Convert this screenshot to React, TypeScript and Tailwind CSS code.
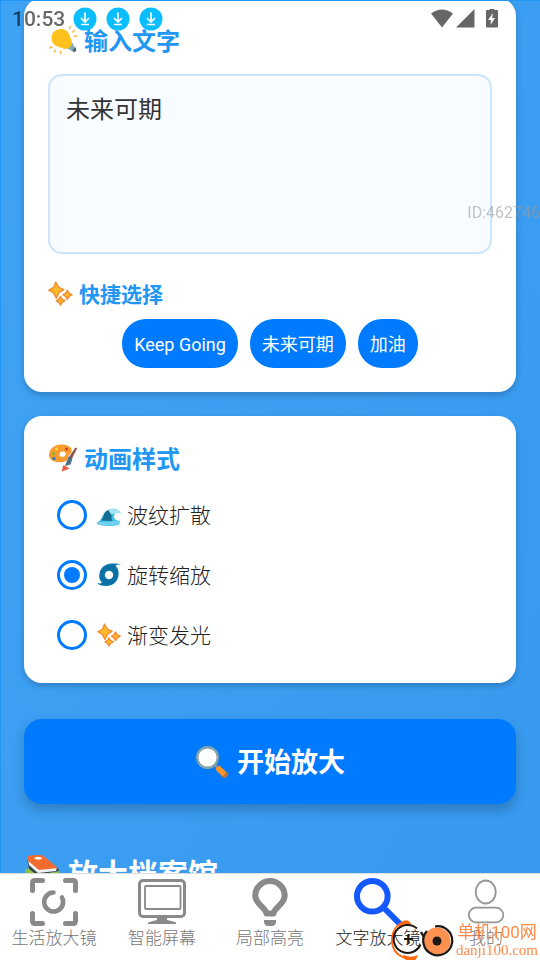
import { useState } from "react"
import type { ReactNode } from "react"

interface IconProps {
  className?: string
}

function BulbEmoji({ className }: IconProps) {
  return (
    <svg viewBox="0 0 30 30" className={className} aria-hidden="true">
      <path d="M20 17l4.500 1 3.500 6.500-2.500 2.500-7-4z" fill="#82aeb5" />
      <path d="M24.500 24.500l3-2.500 1 3.500-2.500 2z" fill="#4f6a75" />
      <path
        d="M3.500 12.500C3.500 7.500 8 4 13 4c4.500 0 7.500 2.500 8.500 6.500.700 3 2.500 4.500 2.500 7 0 3.500-3 6.500-6.500 6.500-2.500 0-4-1.500-7-2.200C6.500 21 3.500 17.500 3.500 12.500z"
        fill="#fdc01c"
      />
      <g stroke="#fcb533" strokeWidth="1.400" strokeLinecap="round">
        <path d="M21.500 3.500l.900-1.700M24.500 7l2-1.500M26.500 11l2 .300M4 22l-2.300 1M7.500 25l-1.200 2M12.500 26.500l.300 2" />
      </g>
    </svg>
  )
}

function SparklesEmoji({ className }: IconProps) {
  return (
    <svg viewBox="0 0 24 24" className={className} aria-hidden="true">
      <g fill="#fcb929" stroke="#f5892f" strokeWidth="1.300" strokeLinejoin="round">
        <path d="M7.500 1l2.700 5 5 2.300-4.800 3L8 16.500l-2.700-5L.800 8.800l4.700-2.600z" />
        <path d="M18.500 9l1.500 2.700 3.200 1.500-3 1.700-1.700 2.700-1.500-2.700-2.700-1.700 2.700-1.500z" />
        <path d="M12 14.800l1.400 2.600 2.900 1.500-2.900 1.600-1.400 2.700-1.500-2.700L8 18.900l2.500-1.500z" />
      </g>
    </svg>
  )
}

function PaletteEmoji({ className }: IconProps) {
  return (
    <svg viewBox="0 0 30 30" className={className} aria-hidden="true">
      <path
        fillRule="evenodd"
        d="M1 12C1 6 6.500 1.500 13.500 1.500c6 0 10.500 2.500 10.200 6.500-.200 3-3.200 3.500-3.700 6-.300 2-1 4.500-5 5-7 1-14-1-14-7zm14-3.500c-2.500 0-4 1.700-3.500 3.700.700 2 5.200 2.300 6.200-.200.700-2-.700-3.500-2.700-3.500z"
        fill="#f99b2d"
      />
      <circle cx="18.500" cy="6" r="1.500" fill="#c7392b" />
      <circle cx="5.500" cy="10.500" r="1.500" fill="#7cb342" />
      <circle cx="8.500" cy="6" r="1.500" fill="#fdd835" />
      <circle cx="6" cy="15.500" r="1.700" fill="#2386c8" />
      <path d="M27.500 4.500l1.600.800-6 12-3.200-1.700z" fill="#8d5548" />
      <path d="M20.500 13.500l4 2-2 6-5.500 1.500z" fill="#4d7080" />
      <path d="M15.500 22l6 3.500-3.500 1.500-4.500 1.500c1-2 1-4.500 2-6.500z" fill="#ef5a3c" />
    </svg>
  )
}

function WaveEmoji({ className }: IconProps) {
  return (
    <svg viewBox="0 0 24 24" className={className} aria-hidden="true">
      <path
        d="M0 19.500c3-1 4-3.500 5.500-6.500C7.500 8.500 11 6 15.500 5.700c4-.200 7.500 1.800 8.500 5.300-2-1.500-4-1.500-5.500-.500-1.700 1.500-2 4-.500 5.800 1.300 1.200 3 1.700 5 1.700l-1 4c-7 1.300-17 1.300-22-1z"
        fill="#42bfe8"
      />
      <path d="M4 17.500c2-2 2.500-5.500 4-8 1.500-1.800 4-3 6.500-3l1.500 3.500c-2 2-2 5-.500 8z" fill="#146e93" />
      <path d="M11 7c5-2.500 11-1.500 13 4-2.500-1.800-5-1.300-6.200.500l-1.800-1-1.500 1.500-1.200-2z" fill="#a9e4f5" />
      <path d="M0 19.500c6-2 9 .500 13-1 4-1 8-1 10-.500l-1 3.500c-7 1.500-17 1-22-1z" fill="#6fd0f0" />
    </svg>
  )
}

function CycloneEmoji({ className }: IconProps) {
  return (
    <svg viewBox="0 0 24 24" className={className} aria-hidden="true">
      <path
        fillRule="evenodd"
        d="M24 1.500c-2.500-.300-4.500.200-5.500 1.300C21 5 22 8.500 21.500 12.500 20.500 19 15.500 23 9 23c-4 0-7.500-1-9-3 2 .800 4 .500 5-.500C2.500 17 1.700 14 2.500 10.500 3.500 4.500 8.500 .8 15 .500c3.500-.200 7 0 9 1zM12 7.800a4.200 4.200 0 1 0 0 8.400 4.200 4.200 0 0 0 0-8.400z"
        fill="#0872a6"
      />
    </svg>
  )
}

function MagnifierEmoji({ className }: IconProps) {
  return (
    <svg viewBox="0 0 34 34" className={className} aria-hidden="true">
      <path d="M19 19l5 5" stroke="#78909c" strokeWidth="3" />
      <circle cx="12.500" cy="12.500" r="10.300" fill="#fff" stroke="#82a5aa" strokeWidth="2.400" />
      <path d="M24 24l5.500 5.500" stroke="#f79329" strokeWidth="6" strokeLinecap="round" />
      <path d="M28.500 32l4-4" stroke="#b96a2d" strokeWidth="2" strokeLinecap="round" />
    </svg>
  )
}

function BooksEmoji({ className }: IconProps) {
  return (
    <svg viewBox="0 0 36 36" className={className} aria-hidden="true">
      <path d="M1 16l4-2 10 6 20-3v12l-20 5L2 24z" fill="#8bc34a" />
      <path d="M3 5l2 10 8 6 22-4-1-3z" fill="#37474f" />
      <path d="M4 6l10 9 19-2-1 4-18 2L5 11z" fill="#f3f3f3" />
      <path d="M3 3c1-1.500 9-2.500 16-1.500L34 14l-19 2L3 6z" fill="#f26c30" />
      <path d="M10 4c2-1.500 7-1.500 8 0-1 2-6 2.500-8 0z" fill="#fff" />
    </svg>
  )
}

function ScanIcon() {
  return (
    <svg viewBox="0 0 48 48" className="size-12" fill="none" stroke="#8a8a8a" strokeWidth="5" strokeLinecap="round" aria-hidden="true">
      <path d="M2.500 12.500V5q0-2.500 2.500-2.500h7.500M35.500 2.500H43q2.500 0 2.500 2.500v7.500M45.500 35.500V43q0 2.500-2.500 2.500h-7.500M12.500 45.500H5q-2.500 0-2.500-2.500v-7.500" />
      <path d="M23.500 14.500a9.500 9.500 0 1 0 8.500 5" strokeWidth="4.600" />
    </svg>
  )
}

function ScreenIcon() {
  return (
    <svg viewBox="0 0 48 48" className="size-12" fill="none" stroke="#8a8a8a" aria-hidden="true">
      <rect x="1.500" y="2.500" width="45" height="36" rx="3.500" strokeWidth="3" />
      <rect x="7" y="8" width="35.500" height="23" rx="1" strokeWidth="1.800" />
      <path d="M19 39h10v3q6 1 9 2.500v1.500H10v-1.500q4-1.500 9-2.500z" fill="#8a8a8a" stroke="none" />
    </svg>
  )
}

function LightIcon() {
  return (
    <svg viewBox="0 0 48 48" className="size-12" aria-hidden="true">
      <path
        d="M20.500 35.500C20 30 9.300 26 9.300 17.700a14.700 14.700 0 0 1 29.400 0C38.700 26 28 30 27.500 35.500z"
        fill="none"
        stroke="#8a8a8a"
        strokeWidth="6"
        strokeLinejoin="round"
      />
      <path d="M18 42h12v2.500q-1 3.500-4 3.500h-4q-3 0-4-3.500z" fill="#8a8a8a" />
    </svg>
  )
}

function SearchIcon() {
  return (
    <svg viewBox="0 0 48 48" className="size-12" fill="none" stroke="#1459ff" strokeWidth="6" aria-hidden="true">
      <circle cx="18.300" cy="18.300" r="15.300" />
      <path d="M29 29l18 18" />
    </svg>
  )
}

function PersonIcon() {
  return (
    <svg viewBox="0 0 48 48" className="size-12" fill="none" stroke="#969696" strokeWidth="1.800" aria-hidden="true">
      <ellipse cx="23.700" cy="14" rx="10" ry="11.500" />
      <rect x="6.800" y="29.700" width="34.500" height="14.600" rx="7.300" />
    </svg>
  )
}

function DownloadBadge() {
  return (
    <svg viewBox="0 0 24 24" className="size-6" aria-hidden="true">
      <circle cx="12" cy="12" r="11.500" fill="#09bdff" />
      <path d="M12 5.500v9M8 11l4 4 4-4M8 17.500h8" fill="none" stroke="#fff" strokeWidth="1.700" />
    </svg>
  )
}

function StatusBar() {
  return (
    <div className="fixed inset-x-0 top-0 flex h-9 items-center pt-px pr-10 pl-3 font-[Roboto,sans-serif]">
      <span className="text-[21px] leading-6 font-medium text-black/60">10:53</span>
      <div className="ml-2 flex gap-[9px]">
        <DownloadBadge />
        <DownloadBadge />
        <DownloadBadge />
      </div>
      <svg viewBox="0 0 70 20" className="ml-auto h-5 w-[70px]" fill="#666" aria-hidden="true">
        <path d="M1 4.500Q12 -3.500 23 4.500L12 18.500z" />
        <path d="M44.500 0v18.500H26z" />
        <path
          fillRule="evenodd"
          d="M59.500 -1h5v2H67q1 0 1 1v15.500q0 1-1 1H57q-1 0-1-1V2q0-1 1-1h2.500zM63 4l-5 7h3l-.500 5 4.500-7h-3z"
        />
      </svg>
    </div>
  )
}

function Watermark() {
  return (
    <div className="pointer-events-none fixed right-[2px] bottom-0 flex h-10 items-center gap-[2px] text-[#ff8a4a]">
      <svg viewBox="0 0 64 42" className="h-[42px] w-16" fill="none" aria-hidden="true">
        <path d="M14 3.500C7 5 2 12 2 21c0 9 5 15 12 17.500" stroke="#ff6a10" strokeWidth="1.800" />
        <path d="M9 5.500Q17-3 21.500 5.500 15 4 9 8zM14 36q7 3.500 14 0-2 7-8 6-5-1-8-4z" fill="#ff6a10" />
        <path d="M27 9.500a14 14 0 1 0 3.500 16" stroke="#1d1715" strokeWidth="2" />
        <path d="M18.500 15v9M14 20h9" stroke="#1d1715" strokeWidth="2" />
        <path d="M31 13l4 7" stroke="#1d1715" strokeWidth="2.500" />
        <circle cx="47" cy="22" r="13.500" fill="#ff9150" />
        <path d="M45 7.500a14.500 14.500 0 1 1-8 4.500" stroke="#1d1715" strokeWidth="2.200" />
        <circle cx="47" cy="22" r="4.500" fill="#1d1715" />
      </svg>
      <div className="flex flex-col items-center">
        <span className="text-[17px] leading-5">单机100网</span>
        <span className="font-['Liberation_Serif',serif] text-[15px] leading-4">danji100.com</span>
      </div>
    </div>
  )
}

function Card({ children }: { children: ReactNode }) {
  return <section className="rounded-[18px] bg-white p-6 shadow-[0_3px_6px_rgba(0,0,0,0.2)]">{children}</section>
}

const quickPicks = ["Keep Going", "未来可期", "加油"]

const animations = [
  { id: "ripple", label: "波纹扩散", Icon: WaveEmoji },
  { id: "rotate", label: "旋转缩放", Icon: CycloneEmoji },
  { id: "glow", label: "渐变发光", Icon: SparklesEmoji },
]

const tabs = [
  { label: "生活放大镜", Icon: ScanIcon },
  { label: "智能屏幕", Icon: ScreenIcon },
  { label: "局部高亮", Icon: LightIcon },
  { label: "文字放大镜", Icon: SearchIcon, active: true },
  { label: "我的", Icon: PersonIcon },
]

export default function App() {
  const [text, setText] = useState("未来可期")
  const [animation, setAnimation] = useState("rotate")

  return (
    <div className="flex h-screen flex-col overflow-hidden font-[Roboto,'Noto_Sans_CJK_SC',sans-serif]">
      <main className="min-h-0 flex-1 overflow-hidden border-t border-l border-[#2196f3] bg-linear-to-br from-[#3fa3f5] to-[#3799ee] pr-6 pl-[23px] font-['Noto_Sans_CJK_SC',sans-serif]">
        <div className="-mt-[3px] flex flex-col gap-6">
          <Card>
            <h2 className="flex items-center gap-[6px] text-2xl leading-9 font-bold text-[#2196f3]">
              <BulbEmoji className="size-[30px]" />
              <label htmlFor="content">输入文字</label>
            </h2>
            <textarea
              id="content"
              value={text}
              onChange={(e) => setText(e.target.value)}
              className="mt-4 block h-[180px] w-full resize-none rounded-[14px] border-2 border-[#cce5fd] bg-[#f8fbff] p-4 text-2xl leading-8 text-[#333] outline-none"
            />
            <h3 className="mt-6 flex items-center gap-[6px] text-[21px] leading-[30px] font-bold text-[#2196f3]">
              <SparklesEmoji className="size-[25px]" />
              快捷选择
            </h3>
            <div className="mt-[11px] flex flex-wrap justify-center gap-3">
              {quickPicks.map((pick) => (
                <button
                  key={pick}
                  type="button"
                  onClick={() => setText(pick)}
                  className="h-[49px] rounded-3xl bg-[#007aff] px-3 pt-[2px] font-[Roboto,'Noto_Sans_CJK_SC',sans-serif] text-lg text-white"
                >
                  {pick}
                </button>
              ))}
            </div>
          </Card>

          <Card>
            <h2 className="flex items-center gap-[6px] text-2xl leading-9 font-bold text-[#2196f3]">
              <PaletteEmoji className="size-[30px]" />
              动画样式
            </h2>
            <div className="mt-[15px] flex flex-col gap-3">
              {animations.map(({ id, label, Icon }) => (
                <label key={id} className="flex h-12 items-center pl-[9px] text-[21px] font-light text-[#222]">
                  <input
                    type="radio"
                    name="animation"
                    value={id}
                    checked={animation === id}
                    onChange={() => setAnimation(id)}
                    className="mr-[10px] size-[30px] appearance-none rounded-full border-3 border-[#007aff] bg-clip-content p-1 checked:bg-[#007aff]"
                  />
                  <Icon className="mr-[6px] size-6" />
                  {label}
                </label>
              ))}
            </div>
          </Card>

          <button
            type="button"
            className="mt-3 flex h-[85px] shrink-0 items-center justify-center gap-2 rounded-[18px] bg-[#007aff] text-[27px] font-bold text-white shadow-[0_6px_12px_rgba(0,0,0,0.2)]"
          >
            <MagnifierEmoji className="size-[34px]" />
            开始放大
          </button>

          <h2 className="mt-6 flex items-center gap-2 text-3xl leading-10 font-bold text-white">
            <BooksEmoji className="size-9" />
            放大档案馆
          </h2>
        </div>
      </main>

      <nav className="grid h-[87px] shrink-0 grid-cols-5 border-t border-[#ddd] bg-white">
        {tabs.map(({ label, Icon, active }) => (
          <a
            key={label}
            href="#"
            aria-current={active ? "page" : undefined}
            className={`flex flex-col items-center pt-1 text-[17px] leading-6 font-light whitespace-nowrap ${active ? "text-[#222]" : "text-[#777]"}`}
          >
            <Icon />
            {label}
          </a>
        ))}
      </nav>

      <StatusBar />
      <span className="pointer-events-none fixed top-[201px] right-0 font-[Roboto,sans-serif] text-base text-[#999]/60">
        ID:462746
      </span>
      <Watermark />
    </div>
  )
}
